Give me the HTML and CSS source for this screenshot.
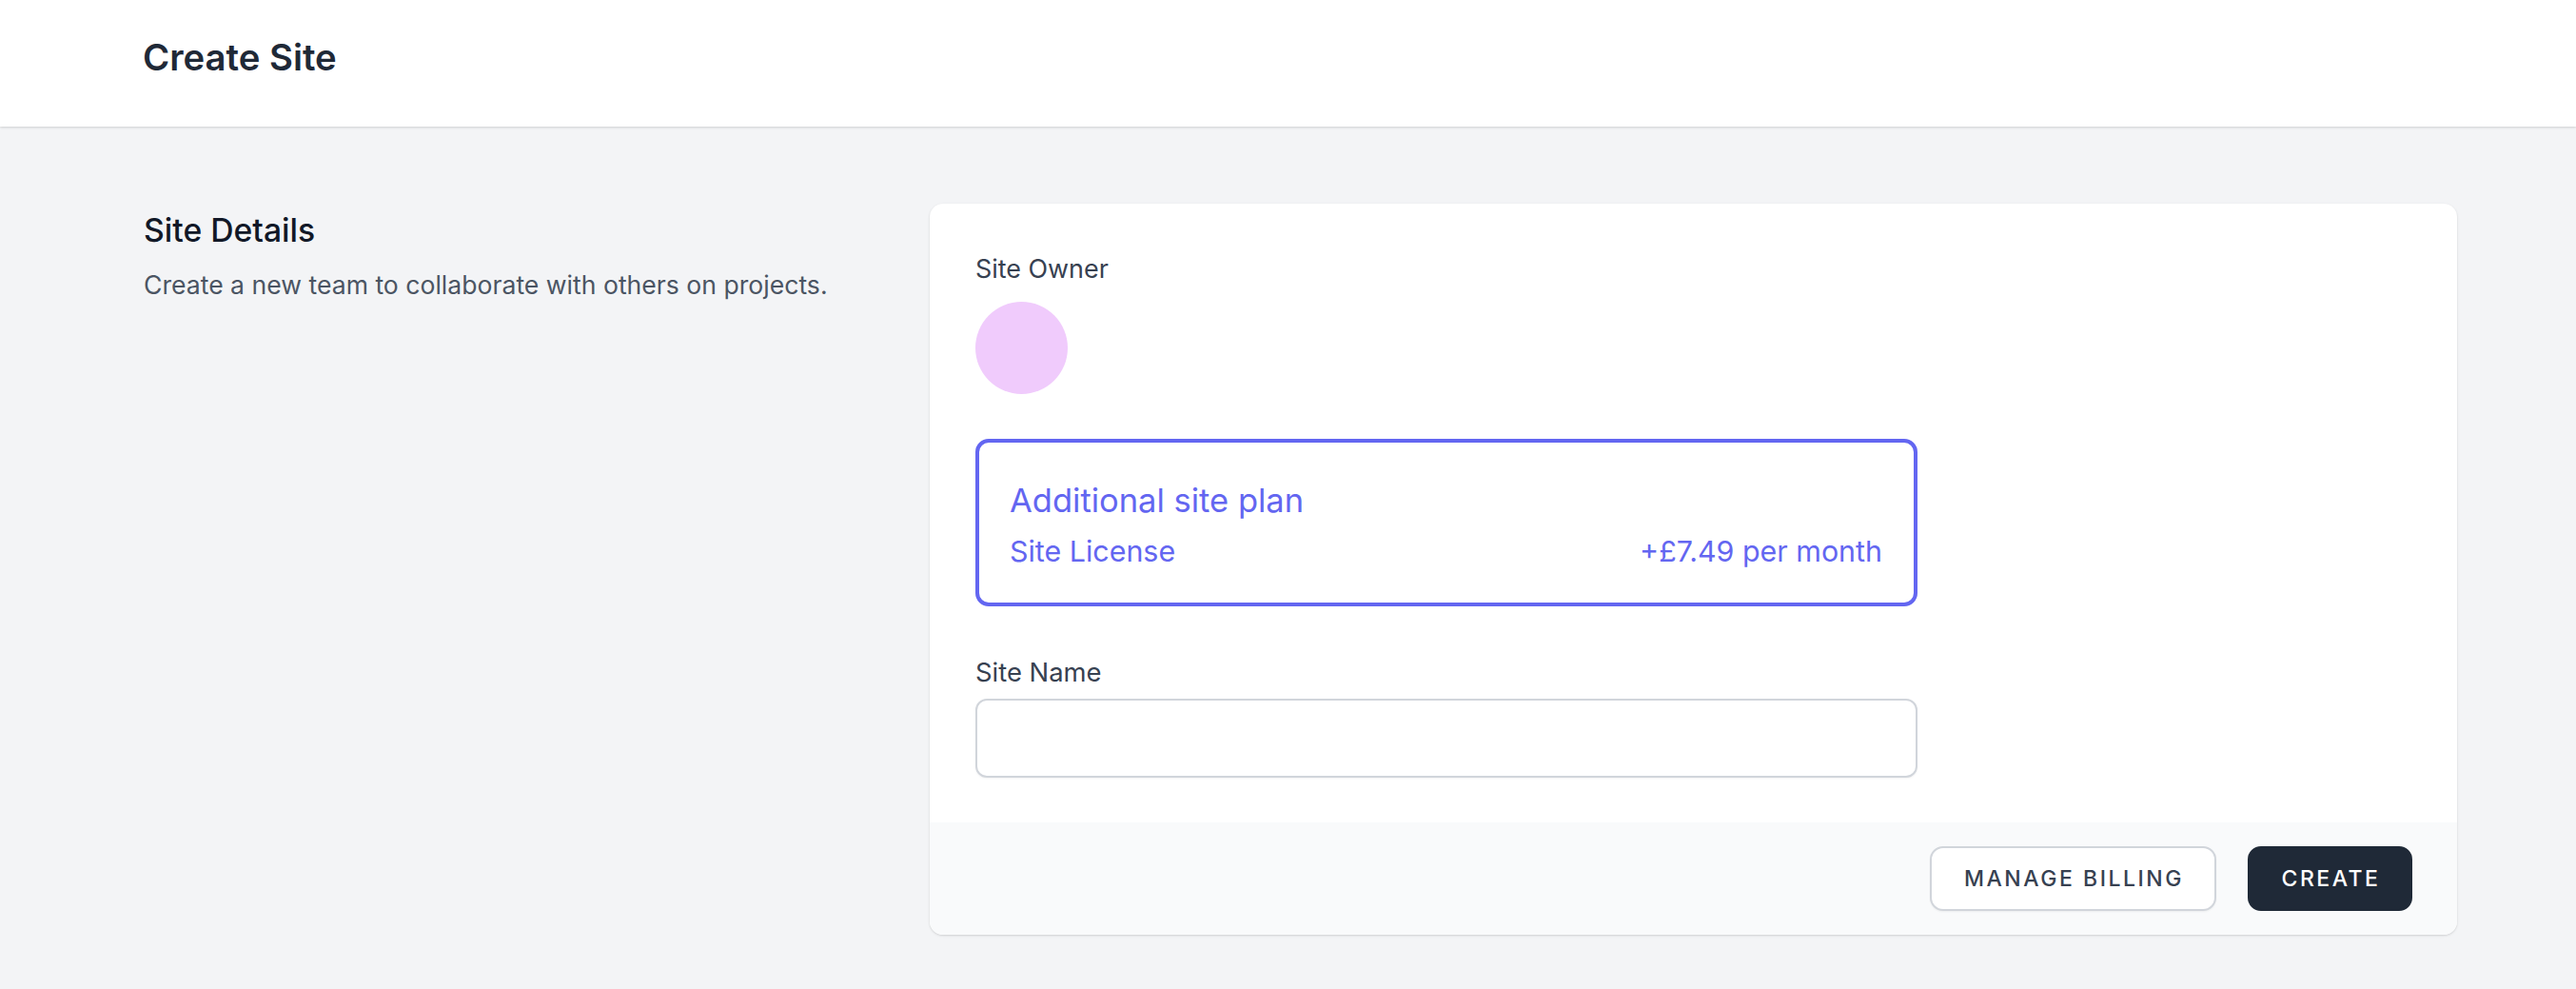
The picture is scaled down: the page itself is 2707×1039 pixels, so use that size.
FILE: index.html
```html
<!DOCTYPE html>
<html lang="en">
<head>
<meta charset="utf-8">
<title>Create Site</title>
<link rel="stylesheet" href="styles.css">
</head>
<body>
<header class="topbar">
  <h1 class="page-title">Create Site</h1>
</header>
<main class="content">
  <section class="section-info">
    <h2 class="section-title">Site Details</h2>
    <p class="section-desc">Create a new team to collaborate with others on projects.</p>
  </section>
  <div class="card">
    <div class="card-body">
      <div class="field">
        <span class="label">Site Owner</span>
        <div class="avatar"></div>
      </div>
      <div class="plan">
        <div class="plan-title">Additional site plan</div>
        <div class="plan-row">
          <span>Site License</span>
          <span>+£7.49 per month</span>
        </div>
      </div>
      <div class="field field-name">
        <label class="label" for="site-name">Site Name</label>
        <input class="input" id="site-name" type="text">
      </div>
    </div>
    <div class="card-footer">
      <button class="btn btn-light" type="button">Manage Billing</button>
      <button class="btn btn-dark" type="button">Create</button>
    </div>
  </div>
</main>
</body>
</html>
```
FILE: styles.css
```css
* { box-sizing: border-box; }
html, body { margin: 0; padding: 0; }
body {
  background: #f3f4f6;
  font-family: Inter, "Noto Sans", sans-serif;
  color: #111827;
  min-height: 1039px;
}
.topbar {
  background: #ffffff;
  height: 133px;
  padding: 34px 150px 0;
  box-shadow: 0 1px 3px rgba(0,0,0,0.1), 0 1px 2px rgba(0,0,0,0.06);
  position: relative;
}
.page-title {
  margin: 0;
  font-size: 38.3px;
  line-height: 52px;
  font-weight: 600;
  color: #1f2937;
}
.content {
  display: grid;
  grid-template-columns: 785px 1604px;
  column-gap: 42px;
  align-items: start;
  padding: 81px 0 0 151px;
}
.section-info { padding-top: 4px; }
.section-title {
  margin: 0;
  font-size: 33.7px;
  line-height: 48px;
  font-weight: 500;
  color: #111827;
}
.section-desc {
  margin: 14.5px 0 0;
  font-size: 26.6px;
  line-height: 36px;
  color: #4b5563;
}
.card {
  margin-left: -1px;
  background: #fff;
  border-radius: 14px;
  box-shadow: 0 1px 3px rgba(0,0,0,0.1), 0 1px 2px rgba(0,0,0,0.06);
  overflow: hidden;
}
.card-body {
  padding: 50px 48px 47px;
}
.label {
  display: block;
  font-size: 26.9px;
  line-height: 36px;
  color: #374151;
}
.avatar {
  width: 97px;
  height: 97px;
  border-radius: 50%;
  background: #f0cbfc;
  margin-top: 17px;
}
.plan {
  width: 990px;
  margin-top: 47px;
  border: 4px solid #6366f1;
  border-radius: 14px;
  padding: 37.5px 33px 34px 32px;
  color: #6366f1;
}
.plan-title {
  font-size: 34.5px;
  line-height: 46px;
}
.plan-row {
  display: flex;
  justify-content: space-between;
  margin-top: 10.5px;
  font-size: 30.4px;
  line-height: 40px;
}
.field-name { margin-top: 51px; }
.field-name .label { font-size: 27.4px; }
.input {
  display: block;
  width: 990px;
  height: 83px;
  margin-top: 10px;
  border: 2px solid #d1d5db;
  border-radius: 12px;
  background: #fff;
  box-shadow: 0 1px 2px rgba(0,0,0,0.05);
  outline: none;
}
.card-footer {
  background: #f9fafb;
  height: 118px;
  display: flex;
  align-items: center;
  justify-content: flex-end;
  gap: 33px;
  padding-right: 47px;
}
.btn {
  height: 68px;
  padding: 0 0 0 2px;
  border-radius: 14px;
  font-family: inherit;
  font-size: 23px;
  font-weight: 500;
  letter-spacing: 0.11em;
  text-transform: uppercase;
}
.btn-light {
  width: 301px;
  background: #fff;
  border: 2px solid #d1d5db;
  color: #374151;
  box-shadow: 0 1px 2px rgba(0,0,0,0.05);
}
.btn-dark {
  width: 173px;
  background: #1f2937;
  border: 2px solid #1f2937;
  color: #fff;
}
```
